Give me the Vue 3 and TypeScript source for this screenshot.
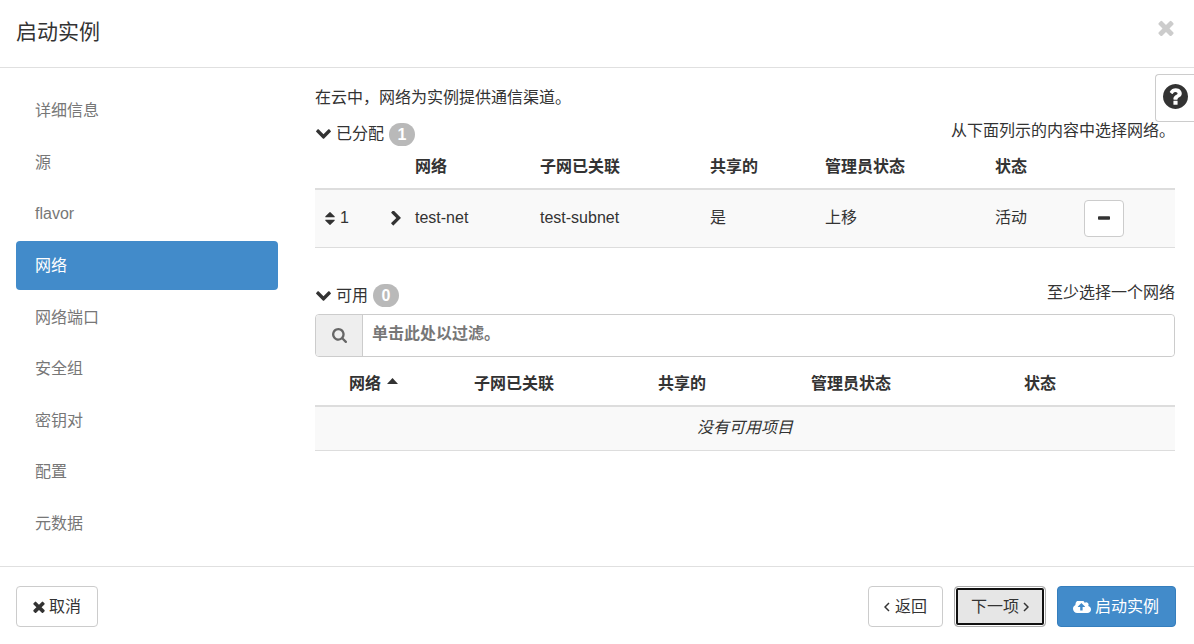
<script setup lang="ts">
import { ref } from 'vue'

interface Network {
  order: number
  name: string
  subnet: string
  shared: string
  admin: string
  status: string
}

const steps: string[] = ['详细信息', '源', 'flavor', '网络', '网络端口', '安全组', '密钥对', '配置', '元数据']
const current = ref('网络')
const filter = ref('')
const headings: string[] = ['网络', '子网已关联', '共享的', '管理员状态', '状态']
const allocated: Network[] = [
  { order: 1, name: 'test-net', subnet: 'test-subnet', shared: '是', admin: '上移', status: '活动' },
]

const times =
  'M1490 1322q0 40-28 68l-136 136q-28 28-68 28t-68-28l-294-294-294 294q-28 28-68 28t-68-28l-136-136q-28-28-28-68t28-68l294-294-294-294q-28-28-28-68t28-68l136-136q28-28 68-28t68 28l294 294 294-294q28-28 68-28t68 28l136 136q28 28 28 68t-28 68l-294 294 294 294q28 28 28 68z'
const chevronDown =
  'M1683 808l-742 741q-19 19-45 19t-45-19l-742-741q-19-19-19-45.5t19-45.5l166-165q19-19 45-19t45 19l531 531 531-531q19-19 45-19t45 19l166 165q19 19 19 45.5t-19 45.5z'
</script>

<template>
  <div class="modal">
    <header class="modal-header">
      <h1>启动实例</h1>
      <button type="button" class="close" aria-label="关闭">
        <svg viewBox="302 302 1188 1252"><path :d="times" /></svg>
      </button>
    </header>

    <div class="modal-body">
      <nav class="steps">
        <a
          v-for="step in steps"
          :key="step"
          href="#"
          :class="{ active: step === current }"
          @click.prevent="current = step"
        >{{ step }}</a>
      </nav>

      <main class="content">
        <p class="intro">在云中，网络为实例提供通信渠道。</p>

        <section class="allocated">
          <div class="section-head">
            <button type="button" class="toggle">
              <svg class="chevron" viewBox="90 533 1612 1035"><path :d="chevronDown" /></svg>
              <span>已分配</span>
              <span class="badge">1</span>
            </button>
            <span class="hint">从下面列示的内容中选择网络。</span>
          </div>
          <table>
            <colgroup>
              <col class="c-order" /><col class="c-expand" /><col class="c-net" /><col class="c-subnet" />
              <col class="c-shared" /><col class="c-admin" /><col class="c-status" /><col class="c-action" />
            </colgroup>
            <thead>
              <tr>
                <th></th>
                <th></th>
                <th v-for="h in headings" :key="h">{{ h }}</th>
                <th></th>
              </tr>
            </thead>
            <tbody>
              <tr v-for="n in allocated" :key="n.order">
                <td>
                  <span class="order">
                    <svg class="sort" viewBox="384 192 1024 1408">
                      <path d="M1408 1088q0 26-19 45l-448 448q-19 19-45 19t-45-19l-448-448q-19-19-19-45t19-45 45-19h896q26 0 45 19t19 45zm0-384q0 26-19 45t-45 19h-896q-26 0-45-19t-19-45 19-45l448-448q19-19 45-19t45 19l448 448q19 19 19 45z" />
                    </svg>
                    {{ n.order }}
                  </span>
                </td>
                <td>
                  <button type="button" class="expand" aria-label="展开">
                    <svg viewBox="346 87 1036 1618">
                      <path d="M1363 877l-742 742q-19 19-45 19t-45-19l-166-166q-19-19-19-45t19-45l531-531-531-531q-19-19-19-45t19-45l166-166q19-19 45-19t45 19l742 742q19 19 19 45t-19 45z" />
                    </svg>
                  </button>
                </td>
                <td>{{ n.name }}</td>
                <td>{{ n.subnet }}</td>
                <td>{{ n.shared }}</td>
                <td>{{ n.admin }}</td>
                <td>{{ n.status }}</td>
                <td>
                  <button type="button" class="btn remove" aria-label="移除">
                    <svg viewBox="192 640 1408 384">
                      <path d="M1600 736v192q0 40-28 68t-68 28h-1216q-40 0-68-28t-28-68v-192q0-40 28-68t68-28h1216q40 0 68 28t28 68z" />
                    </svg>
                  </button>
                </td>
              </tr>
            </tbody>
          </table>
        </section>

        <section class="available">
          <div class="section-head">
            <button type="button" class="toggle">
              <svg class="chevron" viewBox="90 533 1612 1035"><path :d="chevronDown" /></svg>
              <span>可用</span>
              <span class="badge">0</span>
            </button>
            <span class="hint">至少选择一个网络</span>
          </div>
          <div class="filter">
            <label for="network-filter" aria-label="过滤">
              <svg viewBox="64 128 1664 1664">
                <path d="M1216 832q0-185-131.500-316.500t-316.500-131.500-316.500 131.500-131.500 316.500 131.500 316.500 316.500 131.500 316.500-131.500 131.500-316.500zm512 832q0 52-38 90t-90 38q-54 0-90-38l-343-342q-179 124-399 124-143 0-273.500-55.500t-225-150-150-225-55.500-273.500 55.500-273.500 150-225 225-150 273.500-55.500 273.500 55.500 225 150 150 225 55.500 273.500q0 220-124 399l343 343q37 37 37 90z" />
              </svg>
            </label>
            <input id="network-filter" v-model="filter" type="text" placeholder="单击此处以过滤。" />
          </div>
          <table>
            <colgroup>
              <col class="a-expand" /><col class="a-net" /><col class="a-subnet" />
              <col class="a-shared" /><col class="a-admin" /><col class="a-status" />
            </colgroup>
            <thead>
              <tr>
                <th></th>
                <th v-for="(h, i) in headings" :key="h">
                  {{ h }}<svg v-if="i === 0" class="caret" viewBox="0 0 11 6"><path d="M5.500 0L11 6H0z" /></svg>
                </th>
              </tr>
            </thead>
            <tbody>
              <tr>
                <td colspan="6" class="empty">没有可用项目</td>
              </tr>
            </tbody>
          </table>
        </section>
      </main>

      <button type="button" class="help" aria-label="帮助">
        <svg viewBox="128 128 1536 1536">
          <path d="M1024 1376v-192q0-14-9-23t-23-9h-192q-14 0-23 9t-9 23v192q0 14 9 23t23 9h192q14 0 23-9t9-23zm256-672q0-88-55.500-163t-138.500-116-170-41q-243 0-371 213-15 24 8 42l132 100q7 6 19 6 16 0 25-12 53-68 86-92 34-24 86-24 48 0 85.500 26t37.500 59q0 38-20 61t-68 45q-63 28-115.500 86.500t-52.500 125.500v36q0 14 9 23t23 9h192q14 0 23-9t9-23q0-19 21.500-49.500t54.500-49.500q32-18 49-28.500t46-35 44.500-48 28-60.500 12.500-81zm384 192q0 209-103 385.500t-279.500 279.500-385.500 103-385.500-103-279.500-279.500-103-385.500 103-385.500 279.500-279.500 385.500-103 385.500 103 279.500 279.500 103 385.500z" />
        </svg>
      </button>
    </div>

    <footer class="modal-footer">
      <button type="button" class="btn cancel">
        <svg viewBox="302 302 1188 1252"><path :d="times" /></svg>
        取消
      </button>
      <div class="forward">
        <button type="button" class="btn back">
          <svg class="angle" viewBox="0 0 6 10"><path d="M5 1L1 5l4 4" /></svg>
          返回
        </button>
        <button type="button" class="btn next">
          下一项
          <svg class="angle" viewBox="0 0 6 10"><path d="M1 1l4 4-4 4" /></svg>
        </button>
        <button type="button" class="btn launch">
          <svg viewBox="-64 256 1920 1280">
            <path d="M1216 864q0-14-9-23l-352-352q-9-9-23-9t-23 9l-351 351q-10 12-10 24 0 14 9 23t23 9h224v352q0 13 9.500 22.500t22.500 9.500h192q13 0 22.500-9.500t9.500-22.500v-352h224q13 0 22.500-9.500t9.500-22.500zm640 288q0 159-112.500 271.500t-271.500 112.500h-1088q-185 0-316.500-131.500t-131.500-316.500q0-130 70-240t188-165q-2-30-2-43 0-212 150-362t362-150q156 0 285.500 87t188.500 231q71-62 166-62 106 0 181 75t75 181q0 76-41 138 130 31 213.500 135.500t83.500 238.500z" />
          </svg>
          启动实例
        </button>
      </div>
    </footer>
  </div>
</template>

<style>
body {
  background: #fff;
}
</style>

<style scoped>
.modal,
.modal * {
  box-sizing: border-box;
}
.modal {
  display: flex;
  flex-direction: column;
  min-height: 100vh;
  background: #fff;
  color: #333;
  font-family: "Liberation Sans", "Noto Sans CJK SC", sans-serif;
  font-size: 16px;
  line-height: 24px;
}
button,
input {
  margin: 0;
  font: inherit;
  color: inherit;
}
button {
  padding: 0;
  border: 0;
  background: none;
  cursor: pointer;
}
svg {
  display: block;
  flex: none;
  fill: currentColor;
}
.modal-header {
  display: flex;
  justify-content: space-between;
  align-items: flex-start;
  padding: 18px 20px 21px 16px;
  border-bottom: 1px solid #e0e0e0;
}
h1 {
  margin: 0;
  font-size: 21px;
  font-weight: 400;
  line-height: 28px;
}
.close {
  padding: 2px 0;
  color: #ccc;
}
.close svg {
  width: 16px;
  height: 16px;
}
.modal-body {
  position: relative;
  display: flex;
  flex: 1;
  gap: 37px;
  padding: 18px 19px 18px 16px;
}
.steps {
  display: flex;
  flex: none;
  flex-direction: column;
  justify-content: space-between;
  width: 262px;
}
.steps a {
  padding: 13px 19px 12px;
  border-radius: 4px;
  color: #777;
  text-decoration: none;
}
.steps a.active {
  background: #428bca;
  color: #fff;
}
.content {
  flex: 1;
  min-width: 0;
}
.intro {
  margin: 0;
}
.section-head {
  display: flex;
  justify-content: space-between;
  align-items: flex-start;
}
.allocated .section-head {
  padding-top: 8px;
}
.available {
  margin-top: 32px;
}
.toggle {
  display: flex;
  align-items: center;
  gap: 5px;
  padding: 4px 0 0 1px;
}
.chevron {
  width: 15px;
  height: 10px;
}
.badge {
  min-width: 26px;
  border-radius: 12px;
  background: #b9b9b9;
  color: #fff;
  font-weight: 700;
  line-height: 23px;
  text-align: center;
}
.hint {
  padding-top: 1px;
}
table {
  width: 100%;
  border-collapse: collapse;
  table-layout: fixed;
}
th {
  height: 43px;
  padding: 0 8px;
  border-bottom: 2px solid #ddd;
  text-align: left;
  white-space: nowrap;
}
td {
  height: 58px;
  padding: 0 8px;
  border-bottom: 1px solid #ddd;
  background: #f9f9f9;
}
.c-order { width: 67px; }
.c-expand { width: 25px; }
.c-net { width: 125px; }
.c-subnet { width: 170px; }
.c-shared { width: 115px; }
.c-admin { width: 170px; }
.c-status { width: 89px; }
.c-action { width: 99px; }
.a-expand { width: 26px; }
.a-net { width: 125px; }
.a-subnet { width: 184px; }
.a-shared { width: 153px; }
.a-admin { width: 213px; }
.a-status { width: 159px; }
.order {
  display: flex;
  align-items: center;
  gap: 5px;
  padding-left: 2px;
}
.sort {
  width: 10px;
  height: 13px;
}
.expand {
  display: block;
  padding-left: 1px;
}
.expand svg {
  width: 10px;
  height: 15px;
}
.caret {
  display: inline-block;
  width: 11px;
  height: 6px;
  margin-left: 6px;
  vertical-align: 5px;
}
.available table {
  margin-top: 6px;
}
.available td {
  height: 45px;
}
.empty {
  font-style: italic;
  text-align: center;
}
.filter {
  display: flex;
  margin-top: 6px;
  border: 1px solid #ccc;
  border-radius: 4px;
}
.filter label {
  display: flex;
  align-items: center;
  justify-content: center;
  width: 47px;
  border-right: 1px solid #ccc;
  border-radius: 3px 0 0 3px;
  background: #eee;
  color: #666;
}
.filter label svg {
  width: 15px;
  height: 15px;
}
.filter input {
  flex: 1;
  min-width: 0;
  height: 41px;
  padding: 0 9px 2px;
  border: 0;
  border-radius: 4px;
  outline: 0;
  background: #fff;
}
.filter input::placeholder {
  color: #777;
  font-weight: 700;
  opacity: 1;
}
.help {
  position: absolute;
  top: 6px;
  right: 0;
  display: flex;
  align-items: center;
  justify-content: center;
  width: 39px;
  height: 48px;
  padding-bottom: 3px;
  border: 1px solid #ccc;
  border-right: 0;
  border-radius: 4px 0 0 4px;
  background: #fff;
}
.help svg {
  width: 25px;
  height: 25px;
}
.modal-footer {
  display: flex;
  justify-content: space-between;
  padding: 19px 18px 17px 16px;
  border-top: 1px solid #e0e0e0;
}
.forward {
  display: flex;
  gap: 11px;
}
.btn {
  display: flex;
  align-items: center;
  justify-content: center;
  gap: 4px;
  height: 41px;
  padding: 0 15px;
  border: 1px solid #ccc;
  border-radius: 4px;
  background: #fff;
}
.remove {
  width: 40px;
  height: 37px;
  padding: 0;
}
.remove svg {
  width: 12px;
  height: 4px;
}
.cancel,
.next {
  padding: 0 16px;
}
.cancel svg {
  width: 12px;
  height: 12px;
}
.angle {
  width: 6px;
  height: 10px;
  fill: none;
  stroke: currentColor;
  stroke-width: 1.5;
}
.back {
  gap: 5px;
}
.next {
  border-color: #adadad;
  background: #e6e6e6;
  box-shadow: inset 0 0 0 1px #fff, inset 0 0 0 3px #111;
}
.launch {
  padding: 0 16px 0 15px;
  border-color: #357ebd;
  background: #428bca;
  color: #fff;
}
.launch svg {
  width: 18px;
  height: 12px;
}
</style>
